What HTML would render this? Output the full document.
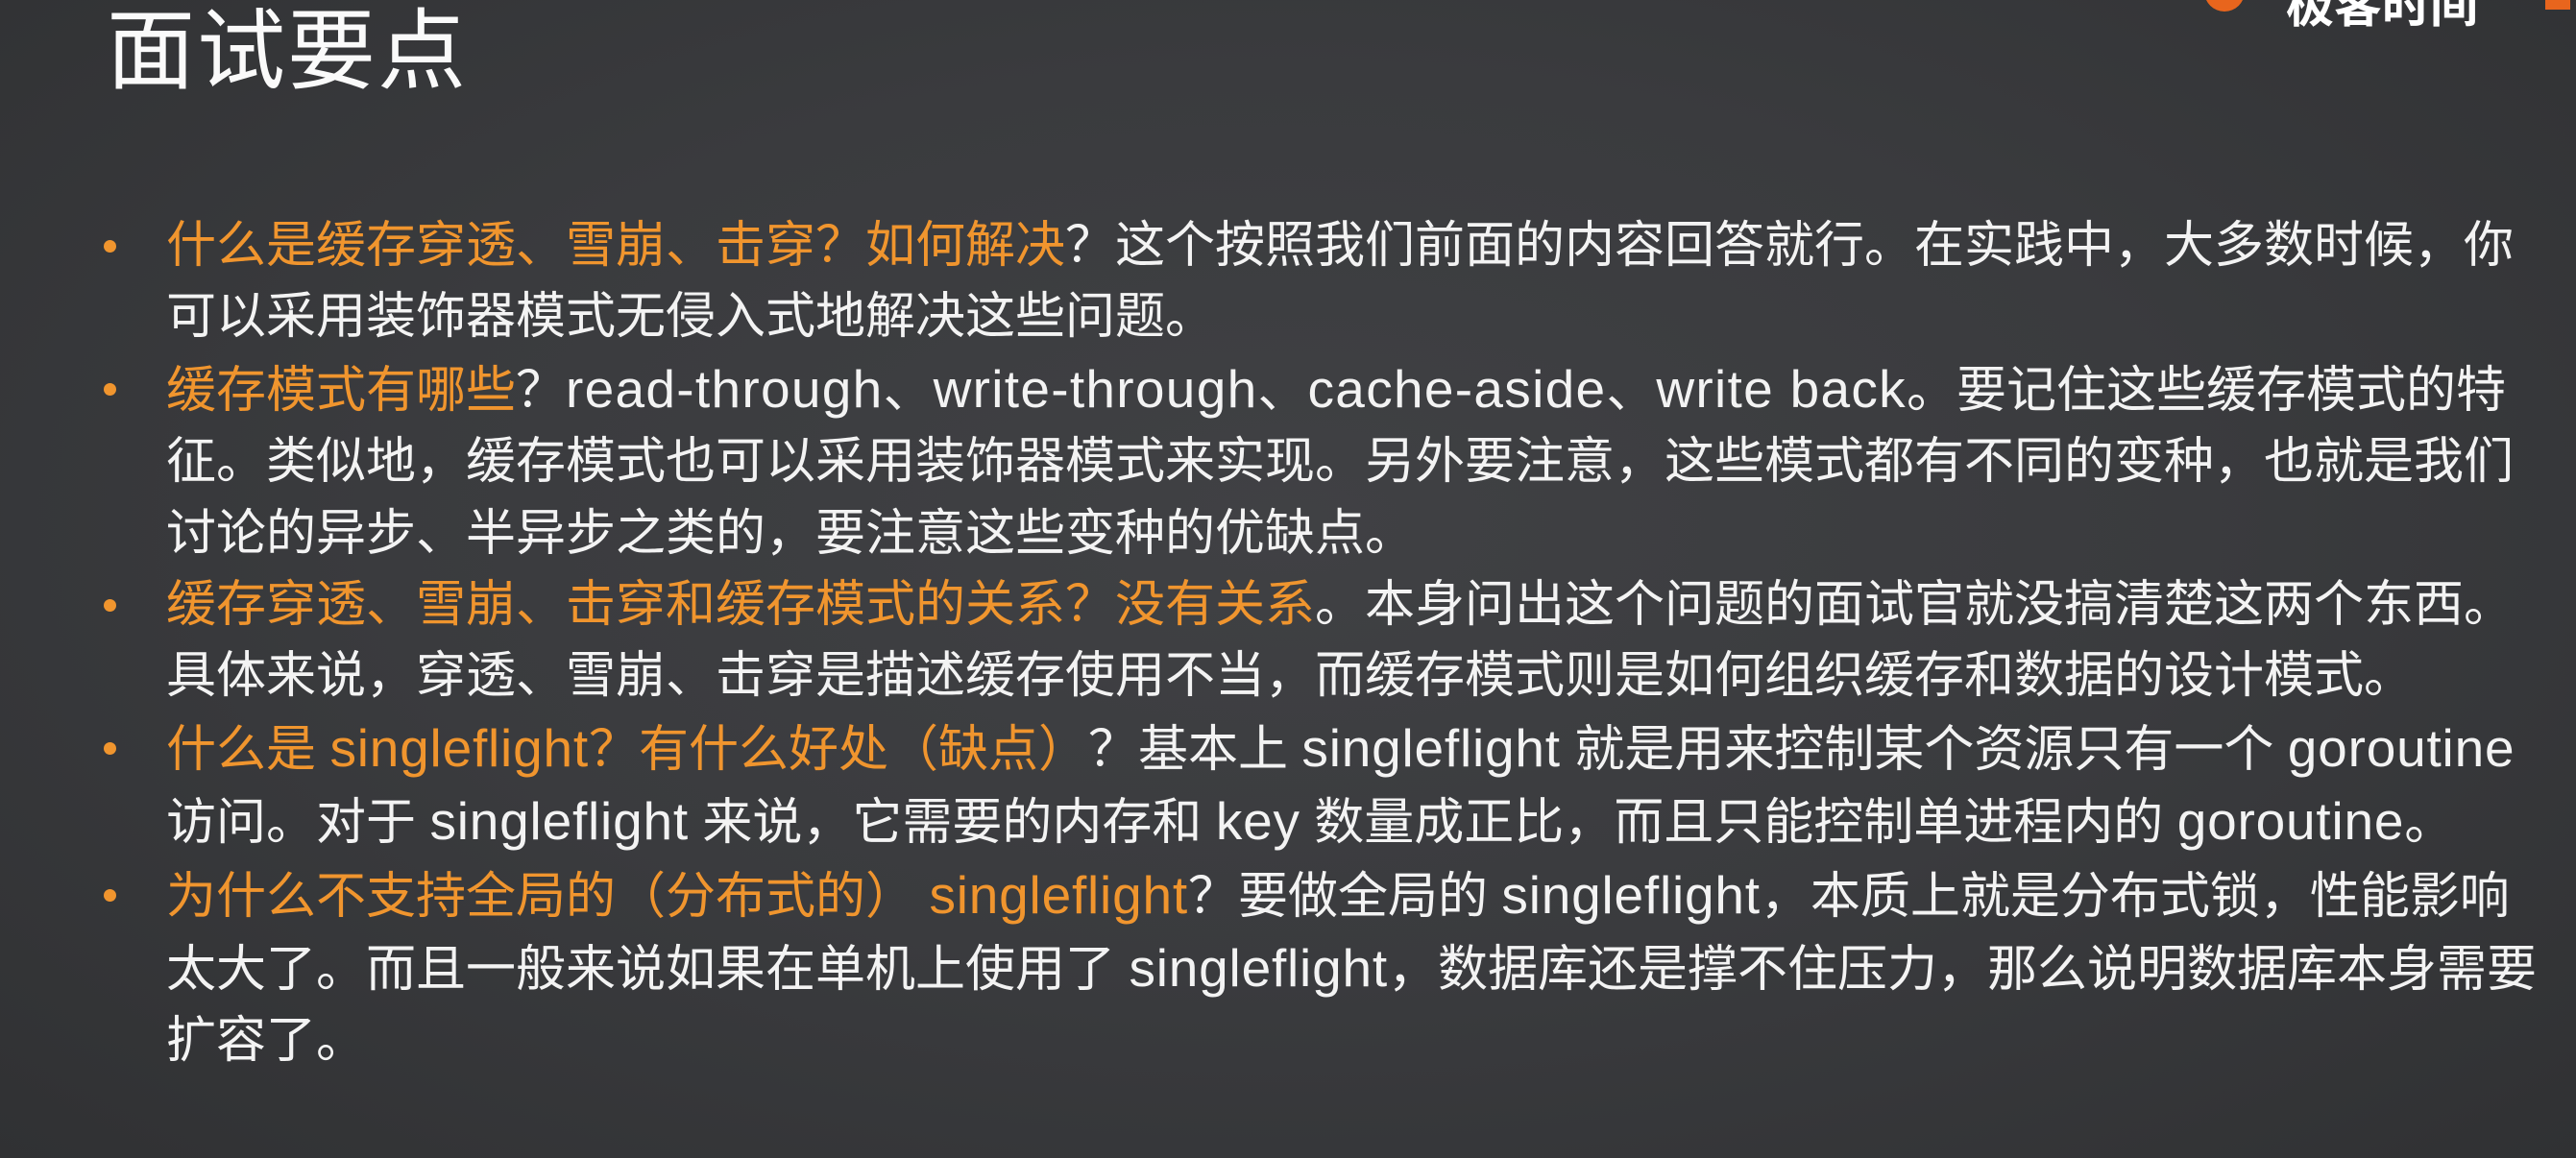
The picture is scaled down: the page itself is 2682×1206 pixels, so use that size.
<!DOCTYPE html>
<html><head><meta charset="utf-8"><style>
html,body{margin:0;padding:0}
body{width:2682px;height:1206px;overflow:hidden;position:relative;
background:radial-gradient(ellipse at 50% 45%,#404144 0%,#3a3b3e 50%,#303133 100%);
font-family:"Liberation Sans","Noto Sans CJK SC",sans-serif;color:#f3f3f3}
.t{position:absolute;left:111px;top:4px;font-size:92px;line-height:100px;color:#fafafa;letter-spacing:2px}
.list{position:absolute;left:173px;top:219px;font-size:52px;line-height:74.4px;white-space:nowrap}
.o{color:#f0952e}
.l{font-size:55px;letter-spacing:0.8px}
.b{position:absolute;left:-65px;width:13px;height:13px;border-radius:50%;background:#f0952e}
.logo{position:absolute;left:2295px;top:-20px;width:42px;height:32px;border-radius:0 0 22px 22px;background:#e8651d}
.lt{position:absolute;left:2380px;top:-34px;font-size:50px;color:#fff;font-weight:bold}
.lr{position:absolute;left:2650px;top:0;width:26px;height:10px;background:#e8651d}
</style></head><body>
<div class="logo"></div><div class="lt">极客时间</div><div class="lr"></div>
<div class="t">面试要点</div>
<div class="list">
<div style="position:relative"><span class="b" style="top:31px"></span><span class="o">什么是缓存穿透、雪崩、击穿？如何解决</span>？这个按照我们前面的内容回答就行。在实践中，大多数时候，你</div>
<div>可以采用装饰器模式无侵入式地解决这些问题。</div>
<div style="position:relative"><span class="b" style="top:31px"></span><span class="o">缓存模式有哪些</span>？<span class="l" style="letter-spacing:1.3px">read-through</span>、<span class="l" style="letter-spacing:1.3px">write-through</span>、<span class="l" style="letter-spacing:1.3px">cache-aside</span>、<span class="l" style="letter-spacing:1.3px">write back</span>。要记住这些缓存模式的特</div>
<div>征。类似地，缓存模式也可以采用装饰器模式来实现。另外要注意，这些模式都有不同的变种，也就是我们</div>
<div>讨论的异步、半异步之类的，要注意这些变种的优缺点。</div>
<div style="position:relative"><span class="b" style="top:31px"></span><span class="o">缓存穿透、雪崩、击穿和缓存模式的关系？没有关系</span>。本身问出这个问题的面试官就没搞清楚这两个东西。</div>
<div>具体来说，穿透、雪崩、击穿是描述缓存使用不当，而缓存模式则是如何组织缓存和数据的设计模式。</div>
<div style="position:relative"><span class="b" style="top:31px"></span><span class="o">什么是 <span class="l">singleflight</span>？有什么好处（缺点）</span>？基本上 <span class="l">singleflight</span> 就是用来控制某个资源只有一个 <span class="l">goroutine</span></div>
<div>访问。对于 <span class="l">singleflight</span> 来说，它需要的内存和 <span class="l">key</span> 数量成正比，而且只能控制单进程内的 <span class="l">goroutine</span>。</div>
<div style="position:relative"><span class="b" style="top:31px"></span><span class="o">为什么不支持全局的（分布式的） <span class="l">singleflight</span></span>？要做全局的 <span class="l">singleflight</span>，本质上就是分布式锁，性能影响</div>
<div>太大了。而且一般来说如果在单机上使用了 <span class="l">singleflight</span>，数据库还是撑不住压力，那么说明数据库本身需要</div>
<div>扩容了。</div>
</div>
</body></html>
